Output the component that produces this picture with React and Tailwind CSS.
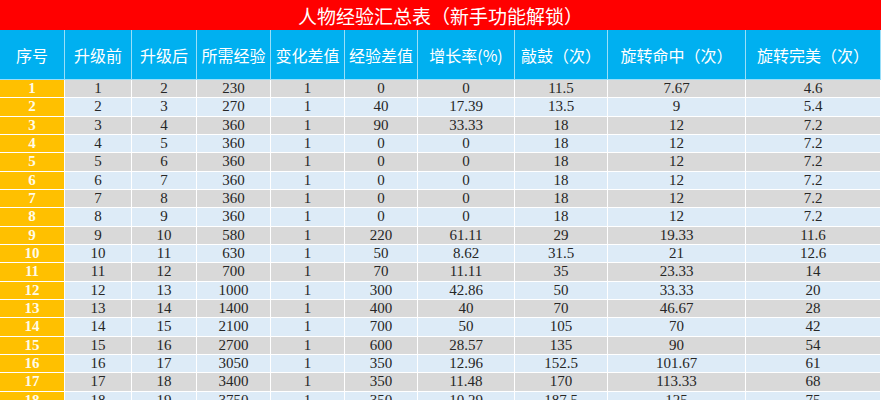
import React from 'react';

const headers = ['序号', '升级前', '升级后', '所需经验', '变化差值', '经验差值', '增长率(%)', '敲鼓（次）', '旋转命中（次）', '旋转完美（次）'];

// 序号, 升级前, 升级后, 所需经验, 变化差值, 经验差值, 增长率, 敲鼓, 旋转命中, 旋转完美
const rows = [
  [1, 1, 2, 230, 1, 0, '0', '11.5', '7.67', '4.6'],
  [2, 2, 3, 270, 1, 40, '17.39', '13.5', '9', '5.4'],
  [3, 3, 4, 360, 1, 90, '33.33', '18', '12', '7.2'],
  [4, 4, 5, 360, 1, 0, '0', '18', '12', '7.2'],
  [5, 5, 6, 360, 1, 0, '0', '18', '12', '7.2'],
  [6, 6, 7, 360, 1, 0, '0', '18', '12', '7.2'],
  [7, 7, 8, 360, 1, 0, '0', '18', '12', '7.2'],
  [8, 8, 9, 360, 1, 0, '0', '18', '12', '7.2'],
  [9, 9, 10, 580, 1, 220, '61.11', '29', '19.33', '11.6'],
  [10, 10, 11, 630, 1, 50, '8.62', '31.5', '21', '12.6'],
  [11, 11, 12, 700, 1, 70, '11.11', '35', '23.33', '14'],
  [12, 12, 13, 1000, 1, 300, '42.86', '50', '33.33', '20'],
  [13, 13, 14, 1400, 1, 400, '40', '70', '46.67', '28'],
  [14, 14, 15, 2100, 1, 700, '50', '105', '70', '42'],
  [15, 15, 16, 2700, 1, 600, '28.57', '135', '90', '54'],
  [16, 16, 17, 3050, 1, 350, '12.96', '152.5', '101.67', '61'],
  [17, 17, 18, 3400, 1, 350, '11.48', '170', '113.33', '68'],
  [18, 18, 19, 3750, 1, 350, '10.29', '187.5', '125', '75'],
];

const cols = 'grid grid-cols-[65px_67px_65px_74px_74px_73px_97px_93px_138px_135px]';

export default function App() {
  return (
    <div className="w-[881px] h-[400px] overflow-hidden bg-white">
      {/* 标题 */}
      <div className="h-[30px] bg-[#ff0000] flex items-center justify-center text-white text-[19px] leading-none font-['Noto_Sans_CJK_SC',sans-serif]">
        人物经验汇总表（新手功能解锁）
      </div>

      {/* 表头 */}
      <div className={`${cols} h-[50px] bg-[#00b0f0]`}>
        {headers.map((h, i) => (
          <div
            key={i}
            className="flex items-center justify-center border-r border-b border-white/60 text-white text-[16px] whitespace-nowrap font-['Noto_Sans_CJK_SC',sans-serif]"
          >
            {h}
          </div>
        ))}
      </div>

      {/* 数据 */}
      {rows.map((r, ri) => (
        <div
          key={ri}
          className={`${cols} h-[18.33px] ${ri % 2 === 0 ? 'bg-[#d9d9d9]' : 'bg-[#ddebf7]'}`}
        >
          {r.map((v, ci) => (
            <div
              key={ci}
              className={
                ci === 0
                  ? 'flex items-center justify-center bg-[#ffc000] border-r border-b border-white text-[#fffbe8] font-bold text-[15px] leading-none font-["Liberation_Serif",serif]'
                  : 'flex items-center justify-center border-r border-b border-white text-[#262626] text-[15px] leading-none font-["Liberation_Serif",serif]'
              }
            >
              {v}
            </div>
          ))}
        </div>
      ))}
    </div>
  );
}
